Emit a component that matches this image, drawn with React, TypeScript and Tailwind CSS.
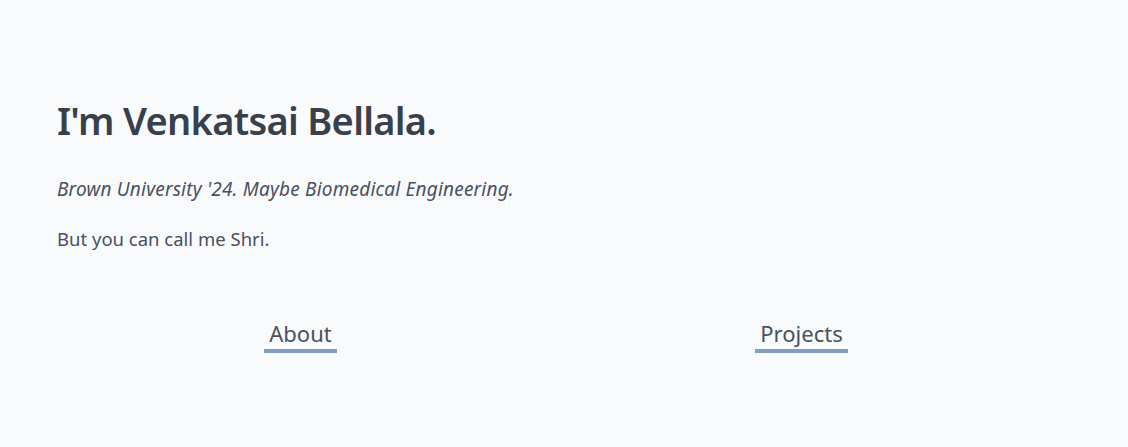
import React from "react";

const links = ["About", "Projects"];

const App: React.FC = () => {
  return (
    <div
      className="min-h-[447px] w-full bg-[#f8fafc] text-[#3f4654]"
      style={{ fontFamily: '"Noto Sans", "Open Sans", sans-serif' }}
    >
      <div className="px-[57px] pt-[96px]">
        <h1 className="text-[38px] font-semibold leading-[48px] tracking-[-0.7px] text-[#383f4d]">
          I'm Venkatsai Bellala.
        </h1>
        <p className="mt-[32px] text-[19px] italic leading-[26px] tracking-[0.2px] text-[#4a5160]">
          Brown University '24. Maybe Biomedical Engineering.
        </p>
        <p className="mt-[24px] text-[18.5px] leading-[26px] text-[#4a5160]">
          But you can call me Shri.
        </p>
      </div>
      <nav className="ml-[50px] mt-[66px] grid w-[1002px] grid-cols-2">
        {links.map((label) => (
          <div key={label} className="flex justify-center">
            <a
              href="#"
              className="border-b-4 border-[#7f9ec0] px-[5px] text-[22px] leading-[31px] text-[#4a5160]"
            >
              {label}
            </a>
          </div>
        ))}
      </nav>
    </div>
  );
};

export default App;
